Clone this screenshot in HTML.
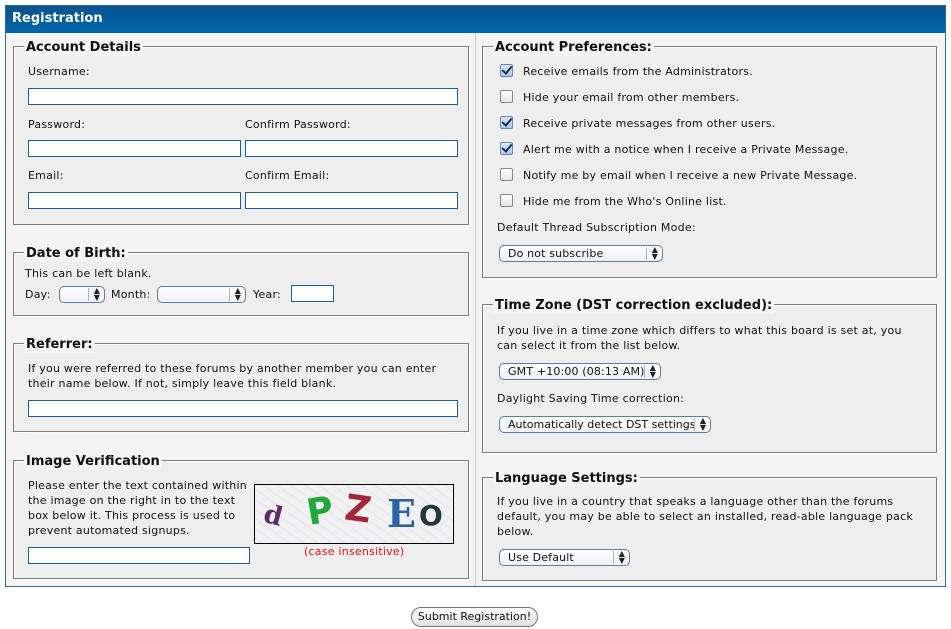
<!DOCTYPE html>
<html><head><meta charset="utf-8">
<style>
*{box-sizing:border-box;margin:0;padding:0}
body{width:951px;height:629px;background:#fff;font-family:"DejaVu Sans","Liberation Sans",sans-serif;font-size:11px;color:#111;position:relative;overflow:hidden}
.a{position:absolute;white-space:nowrap}
#outer{position:absolute;left:5px;top:5px;width:941px;height:582px;border:1px solid #2f6b9a;background:#f4f4f4}
#hdr{position:absolute;left:6px;top:6px;width:939px;height:27px;background:linear-gradient(#08538c,#0066ab);color:#fff;font-weight:bold;font-size:13px;padding:5px 0 0 6px}
#div{position:absolute;left:475px;top:33px;width:1px;height:553px;background:#c5cfdb}
.fs{position:absolute;background:#eee;border:1px solid #7c7c7c;box-shadow:inset 1px 1px 0 #fff,1px 1px 0 #fff}
.lg{position:absolute;font-weight:bold;font-size:13px;background:#f4f4f4;padding:0 2px;top:-7px;left:10px;line-height:16px}
.in{position:absolute;background:#fff;border:1px solid #1d5d8f;height:17px}
.sel{position:absolute;height:17px;border:1px solid #5a7fa3;border-radius:5px;background:linear-gradient(#fff,#eef1f5);padding:1px 0 0 8px;font-size:11px;line-height:13px;letter-spacing:0.15px}
.sel:after{content:"";position:absolute;right:15px;top:1px;width:1px;height:13px;background:#aab8c8}
.sel b{position:absolute;right:4px;top:0;font-size:8px;line-height:7px;font-weight:normal;color:#222}
.cb{position:absolute;left:500px;width:13px;height:13px;border:1px solid #8a8a8a;border-radius:2px;background:linear-gradient(#fff,#e6e6e6)}
.cb.on{background:linear-gradient(#d7e6f6,#a9c7e8);border-color:#6a88a8}
.cb.on:after{content:"";position:absolute;left:3px;top:-1px;width:4px;height:8px;border:solid #1b2f48;border-width:0 2px 2px 0;transform:rotate(40deg)}
.t{position:absolute;white-space:nowrap;line-height:15px;letter-spacing:0.23px}
</style></head><body>
<div id="outer"></div>
<div id="hdr">Registration</div>
<div id="div"></div>

<div class="fs" style="left:13px;top:46px;width:456px;height:179px"><div class="lg">Account Details</div></div>
<div class="t" style="left:28px;top:64px">Username:</div>
<div class="in" style="left:28px;top:88px;width:430px"></div>
<div class="t" style="left:28px;top:117px">Password:</div>
<div class="t" style="left:245px;top:117px">Confirm Password:</div>
<div class="in" style="left:28px;top:140px;width:213px"></div>
<div class="in" style="left:245px;top:140px;width:213px"></div>
<div class="t" style="left:28px;top:168px">Email:</div>
<div class="t" style="left:245px;top:168px">Confirm Email:</div>
<div class="in" style="left:28px;top:192px;width:213px"></div>
<div class="in" style="left:245px;top:192px;width:213px"></div>

<div class="fs" style="left:13px;top:252px;width:456px;height:64px"><div class="lg">Date of Birth:</div></div>
<div class="t" style="left:25px;top:266px">This can be left blank.</div>
<div class="t" style="left:25px;top:287px">Day:</div>
<div class="sel" style="left:59px;top:286px;width:46px"><b>▲<br>▼</b></div>
<div class="t" style="left:111px;top:287px">Month:</div>
<div class="sel" style="left:157px;top:286px;width:89px"><b>▲<br>▼</b></div>
<div class="t" style="left:253px;top:287px">Year:</div>
<div class="in" style="left:291px;top:285px;width:43px"></div>

<div class="fs" style="left:13px;top:343px;width:456px;height:89px"><div class="lg">Referrer:</div></div>
<div class="t" style="left:28px;top:361px">If you were referred to these forums by another member you can enter</div>
<div class="t" style="left:28px;top:376px">their name below. If not, simply leave this field blank.</div>
<div class="in" style="left:28px;top:400px;width:430px"></div>

<div class="fs" style="left:13px;top:460px;width:456px;height:119px"><div class="lg">Image Verification</div></div>
<div class="t" style="left:28px;top:478px">Please enter the text contained within<br>the image on the right in to the text<br>box below it. This process is used to<br>prevent automated signups.</div>
<div class="in" style="left:28px;top:547px;width:222px"></div>
<div class="a" style="left:254px;top:484px;width:200px;height:60px;border:1px solid #000;background:repeating-linear-gradient(35deg,#f3eef8 0 3px,#e4ecf4 3px 5px,#f6f2ea 5px 8px);overflow:hidden">
<span class="a" style="left:9px;top:16px;font:bold 26px 'DejaVu Serif',serif;color:#5a2a6a;transform:rotate(15deg)">d</span>
<span class="a" style="left:52px;top:6px;font:bold 36px 'DejaVu Sans',sans-serif;color:#22a83a;transform:rotate(-10deg)">P</span>
<span class="a" style="left:90px;top:4px;font:bold 36px 'DejaVu Sans',sans-serif;color:#a3263a;transform:rotate(8deg)">Z</span>
<span class="a" style="left:132px;top:6px;font:bold 38px 'DejaVu Serif',serif;color:#2a62a8">E</span>
<span class="a" style="left:164px;top:14px;font:bold 28px 'DejaVu Sans',sans-serif;color:#1f3a38">O</span>
</div>
<div class="t" style="left:304px;top:544px;color:#e8121e">(case insensitive)</div>

<div class="fs" style="left:482px;top:46px;width:455px;height:232px"><div class="lg">Account Preferences:</div></div>
<div class="cb on" style="top:64px"></div><div class="t" style="left:523px;top:64px">Receive emails from the Administrators.</div>
<div class="cb" style="top:90px"></div><div class="t" style="left:523px;top:90px">Hide your email from other members.</div>
<div class="cb on" style="top:116px"></div><div class="t" style="left:523px;top:116px">Receive private messages from other users.</div>
<div class="cb on" style="top:142px"></div><div class="t" style="left:523px;top:142px">Alert me with a notice when I receive a Private Message.</div>
<div class="cb" style="top:168px"></div><div class="t" style="left:523px;top:168px">Notify me by email when I receive a new Private Message.</div>
<div class="cb" style="top:194px"></div><div class="t" style="left:523px;top:194px">Hide me from the Who's Online list.</div>
<div class="t" style="left:497px;top:220px">Default Thread Subscription Mode:</div>
<div class="sel" style="left:499px;top:245px;width:164px">Do not subscribe<b>▲<br>▼</b></div>

<div class="fs" style="left:482px;top:304px;width:455px;height:149px"><div class="lg">Time Zone (DST correction excluded):</div></div>
<div class="t" style="left:497px;top:323px">If you live in a time zone which differs to what this board is set at, you<br>can select it from the list below.</div>
<div class="sel" style="left:499px;top:363px;width:162px">GMT +10:00 (08:13 AM)<b>▲<br>▼</b></div>
<div class="t" style="left:497px;top:391px">Daylight Saving Time correction:</div>
<div class="sel" style="left:499px;top:416px;width:212px;letter-spacing:0">Automatically detect DST settings<b>▲<br>▼</b></div>

<div class="fs" style="left:482px;top:477px;width:455px;height:104px"><div class="lg">Language Settings:</div></div>
<div class="t" style="left:497px;top:494px">If you live in a country that speaks a language other than the forums<br>default, you may be able to select an installed, read-able language pack<br>below.</div>
<div class="sel" style="left:499px;top:549px;width:131px">Use Default<b>▲<br>▼</b></div>

<div class="a" style="left:411px;top:607px;width:127px;height:20px;border:1px solid #777;border-radius:10px;background:linear-gradient(#fff,#e2e2e2);text-align:center;line-height:18px;font-size:11px">Submit Registration!</div>
</body></html>
